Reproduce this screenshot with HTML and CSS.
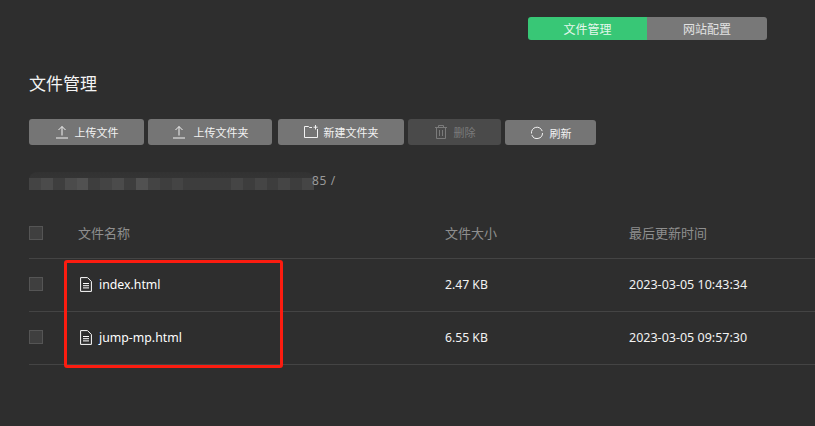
FILE: index.html
```html
<!DOCTYPE html>
<html lang="zh-CN">
<head>
<meta charset="utf-8">
<title>文件管理</title>
<link rel="stylesheet" href="styles.css">
</head>
<body>
<div class="tabs">
  <div class="tab tab-active">文件管理</div>
  <div class="tab">网站配置</div>
</div>
<h1 class="title">文件管理</h1>
<div class="toolbar">
  <button class="btn btn-upload">
    <svg class="ico" viewBox="0 0 14 14"><path d="M7 1.500V10.500M3.500 5 7 1.500 10.500 5M1 13H13"/></svg>上传文件
  </button>
  <button class="btn btn-folder-up">
    <svg class="ico" viewBox="0 0 14 14"><path d="M7 1.500V10.500M3.500 5 7 1.500 10.500 5M1 13H13"/></svg>上传文件夹
  </button>
  <button class="btn btn-new">
    <svg class="ico" viewBox="0 0 14 14"><path d="M8 2.500H5.500L4.500 1.500H.5V12.500H13.500V4M11.500 0V4.500M9.500 2.200H13.500"/></svg>新建文件夹
  </button>
  <button class="btn btn-del" disabled>
    <svg class="ico" viewBox="0 0 14 14"><path d="M1 2.500H13M2.500 2.500V13.500H11.500V2.500M4.500 2.500V.5H9.500V2.500M5.500 5V11M8.500 5V11"/></svg>删除
  </button>
  <button class="btn btn-refresh">
    <svg class="ico" viewBox="0 0 14 14"><path d="M12.200 5.100A5.500 5.500 0 0 0 1.500 7.500M1.900 9.100A5.500 5.500 0 0 0 12.500 7"/></svg>刷新
  </button>
</div>
<div class="path">
  <div class="mosaic"><i></i><i></i><i></i><i></i><i></i><i></i><i></i><i></i><i></i><i></i><i></i><i></i><i></i><i></i><i></i><i></i><i></i><i></i><i></i><i></i><i></i><i></i><i></i><i></i></div>
  <span class="path-text">85 /</span>
</div>
<div class="table">
  <div class="row head">
    <span class="check"></span><span>文件名称</span><span>文件大小</span><span>最后更新时间</span>
  </div>
  <div class="row body-row">
    <span class="check"></span>
    <span class="name"><svg class="file" viewBox="0 0 12 15"><path d="M.6.6H7.500L11.400 4.500V14.400H.6ZM3 6.500H9M3 8.700H9M3 10.900H9"/></svg>index.html</span>
    <span class="size">2.47 KB</span><span>2023-03-05 10:43:34</span>
  </div>
  <div class="row body-row">
    <span class="check"></span>
    <span class="name"><svg class="file" viewBox="0 0 12 15"><path d="M.6.6H7.500L11.400 4.500V14.400H.6ZM3 6.500H9M3 8.700H9M3 10.900H9"/></svg>jump-mp.html</span>
    <span class="size">6.55 KB</span><span>2023-03-05 09:57:30</span>
  </div>
  <div class="highlight"></div>
</div>
</body>
</html>
```
FILE: styles.css
```css
* { box-sizing: border-box; }
html, body { margin: 0; height: 100%; overflow: hidden; }
body {
  background: #2e2e2e;
  color: #fff;
  font-family: "Noto Sans", "Noto Sans CJK SC", sans-serif;
  font-size: 12px;
}
.tabs {
  display: flex;
  justify-content: flex-end;
  margin: 17px 48px 0 0;
  height: 23px;
}
.tab {
  width: 120px;
  background: #787878;
  color: #e2e2e2;
  text-align: center;
  line-height: 25px;
  border-radius: 0 3px 3px 0;
}
.tab-active {
  width: 119px;
  background: #38c776;
  color: #e4f7ec;
  border-radius: 3px 0 0 3px;
}
.title {
  margin: 32px 0 0 29px;
  font-size: 17px;
  font-weight: 400;
  line-height: 24px;
  color: #f4f4f4;
}
.toolbar {
  display: flex;
  margin: 23px 0 0 29px;
  height: 26px;
}
.btn {
  display: flex;
  align-items: center;
  justify-content: center;
  height: 26px;
  padding: 0;
  border: 0;
  border-radius: 3px;
  background: #757575;
  color: #f2f2f2;
  font: inherit;
  font-size: 11px;
}
.ico {
  width: 14px;
  height: 14px;
  margin-right: 6px;
  fill: none;
  stroke: currentColor;
  stroke-width: 1;
}
.btn-upload { width: 115px; margin-right: 4px; }
.btn-folder-up { width: 124px; margin-right: 6px; }
.btn-folder-up .ico { margin-right: 8px; }
.btn-new { width: 126px; margin-right: 4px; }
.btn-del { width: 93px; margin-right: 4px; background: #4a4a4a; color: #7b7b7b; }
.btn-refresh { width: 91px; height: 25px; margin-top: 1px; }
.path {
  position: relative;
  height: 20px;
  margin: 26px 0 0 29px;
  color: #9a9a9a;
  line-height: 19px;
}
.path-text { position: absolute; left: 283px; top: 0; letter-spacing: .6px; }
.mosaic {
  position: absolute;
  left: 0;
  top: 1px;
  width: 285px;
  height: 18px;
  display: flex;
  align-items: flex-end;
  background: linear-gradient(#323232, #393939);
  border-radius: 8px 8px 0 0;
}
.mosaic i { flex: 1; height: 12px; background: #444; }
.mosaic i:nth-child(2n) { background: #4b4b4b; }
.mosaic i:nth-child(3n) { background: #3e3e3e; }
.mosaic i:nth-child(5n) { background: #515151; }
.mosaic i:nth-child(n+14) { background: #3d3d3d; }
.mosaic i:nth-child(n+18):nth-child(2n) { background: #454545; }
.table {
  position: relative;
  margin: 16px 0 0 29px;
}
.row {
  display: grid;
  grid-template-columns: 49px 367px 184px 1fr;
  align-items: center;
  height: 53px;
  border-bottom: 1px solid #444;
  color: #f2f2f2;
  font-size: 12.500px;
}
.body-row { padding-bottom: 2px; }
.size { font-size: 12.200px; }
.head {
  height: 52px;
  color: #8f8f8f;
  font-size: 13px;
}
.check {
  width: 14px;
  height: 14px;
  background: #3f3f3f;
  border: 1px solid #555;
}
.name {
  display: flex;
  align-items: center;
  margin-left: 2px;
  font-size: 12.300px;
  color: #fff;
}
.file {
  width: 12px;
  height: 15px;
  margin-right: 7px;
  fill: none;
  stroke: #fff;
  stroke-width: 1;
}
.highlight {
  position: absolute;
  left: 35px;
  top: 53px;
  width: 219px;
  height: 108px;
  border: 3px solid #fb1c10;
  border-radius: 3px;
}
```
